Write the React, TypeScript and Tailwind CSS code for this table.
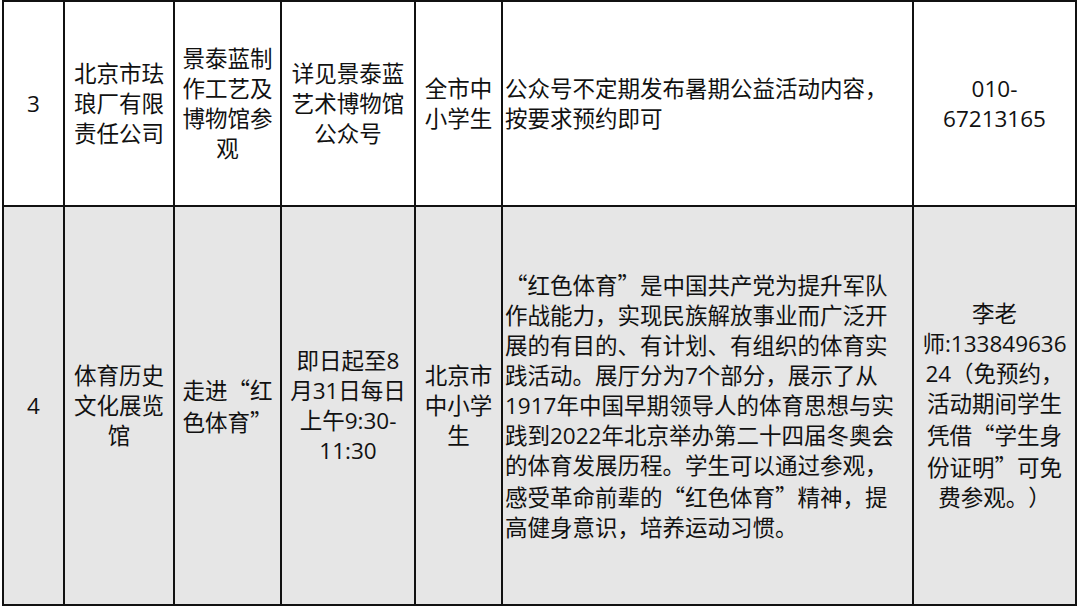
import React from "react"

const CJK = "font-['Noto_Sans_CJK_SC',sans-serif]"

// full-width curly quotes come from the CJK face, like in the source sheet
const Q = ({ children }: { children: React.ReactNode }) => <span className={CJK}>{children}</span>

type Cell = { lines: React.ReactNode[]; left?: boolean }

const rows: { bg: string; cells: Cell[] }[] = [
  {
    bg: "bg-white",
    cells: [
      { lines: ["3"] },
      { lines: ["北京市珐", "琅厂有限", "责任公司"] },
      { lines: ["景泰蓝制", "作工艺及", "博物馆参", "观"] },
      { lines: ["详见景泰蓝", "艺术博物馆", "公众号"] },
      { lines: ["全市中", "小学生"] },
      { lines: ["公众号不定期发布暑期公益活动内容，", "按要求预约即可"], left: true },
      { lines: ["010-", "67213165"] },
    ],
  },
  {
    bg: "bg-[#e6e6e6]",
    cells: [
      { lines: ["4"] },
      { lines: ["体育历史", "文化展览", "馆"] },
      {
        lines: [
          <>走进<Q>“</Q>红</>,
          <>色体育<Q>”</Q></>,
        ],
      },
      { lines: ["即日起至8", "月31日每日", "上午9:30-", "11:30"] },
      { lines: ["北京市", "中小学", "生"] },
      {
        left: true,
        lines: [
          <><Q>“</Q>红色体育<Q>”</Q>是中国共产党为提升军队</>,
          "作战能力，实现民族解放事业而广泛开",
          "展的有目的、有计划、有组织的体育实",
          "践活动。展厅分为7个部分，展示了从",
          "1917年中国早期领导人的体育思想与实",
          "践到2022年北京举办第二十四届冬奥会",
          "的体育发展历程。学生可以通过参观，",
          <>感受革命前辈的<Q>“</Q>红色体育<Q>”</Q>精神，提</>,
          "高健身意识，培养运动习惯。",
        ],
      },
      {
        lines: [
          "李老",
          "师:133849636",
          "24（免预约，",
          "活动期间学生",
          <>凭借<Q>“</Q>学生身</>,
          <>份证明<Q>”</Q>可免</>,
          "费参观。）",
        ],
      },
    ],
  },
]

const widths = ["w-[61px]", "w-[110px]", "w-[107px]", "w-[134px]", "w-[87px]", "w-[411px]", "w-[163px]"]

export default function App() {
  return (
    <div className="w-[1080px] h-[608px] bg-white pl-[2px] overflow-hidden">
      <table
        className={`table-fixed border-collapse w-[1075px] text-[22.5px] leading-[30px] text-[#111] [text-spacing-trim:space-all] font-['Open_Sans','Noto_Sans_CJK_SC',sans-serif]`}
      >
        <colgroup>
          {widths.map((w) => (
            <col key={w} className={w} />
          ))}
        </colgroup>
        <tbody>
          {rows.map((row, i) => (
            <tr key={i} className={`${row.bg} ${i === 0 ? "h-[205px]" : "h-[399px]"}`}>
              {row.cells.map((cell, j) => (
                <td
                  key={j}
                  className={`border-2 border-[#111] align-middle p-0 ${cell.left ? "text-left pl-[2px]" : "text-center"}`}
                >
                  {cell.lines.map((l, k) => (
                    <div key={k} className="whitespace-nowrap">
                      {l}
                    </div>
                  ))}
                </td>
              ))}
            </tr>
          ))}
        </tbody>
      </table>
    </div>
  )
}
